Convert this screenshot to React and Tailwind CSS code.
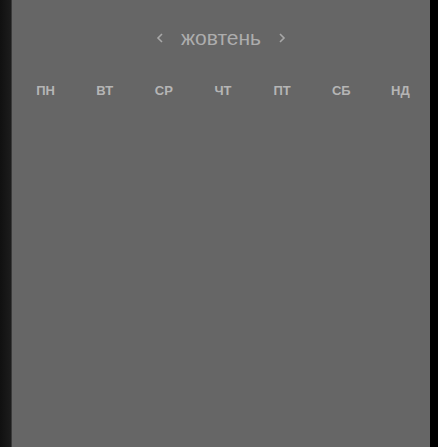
const DAYS = ['ПН', 'ВТ', 'СР', 'ЧТ', 'ПТ', 'СБ', 'НД']

function Chevron({ dir }) {
  const d = dir === 'left' ? 'M6 1 L2 5 L6 9' : 'M2 1 L6 5 L2 9'
  return (
    <svg width="8" height="10" viewBox="0 0 8 10" className="text-[#a8a8a8]">
      <path d={d} fill="none" stroke="currentColor" strokeWidth="1.6" />
    </svg>
  )
}

export default function App() {
  return (
    <div className="flex h-[447px] w-[438px] bg-black" style={{ fontFamily: '"Liberation Sans", Arial, sans-serif' }}>
      <div className="w-[12px] h-full bg-gradient-to-r from-[#101010] to-[#1c1c1c] border-r border-[#3a3a3a]" />
      <div className="flex-1 h-full bg-[#666666] flex flex-col">
        <div className="flex items-center justify-center gap-[17px] pt-[23px] h-[52px]">
          <Chevron dir="left" />
          <span className="text-[21px] text-[#adadad] leading-none">жовтень</span>
          <Chevron dir="right" />
        </div>
        <div className="grid grid-cols-7 pl-[4px] pr-[0px] mt-[32px]">
          {DAYS.map((d) => (
            <div key={d} className="text-center text-[13px] font-bold text-[#b5b5b5] leading-none">
              {d}
            </div>
          ))}
        </div>
      </div>
      <div className="w-[8px] h-full bg-black" />
    </div>
  )
}
